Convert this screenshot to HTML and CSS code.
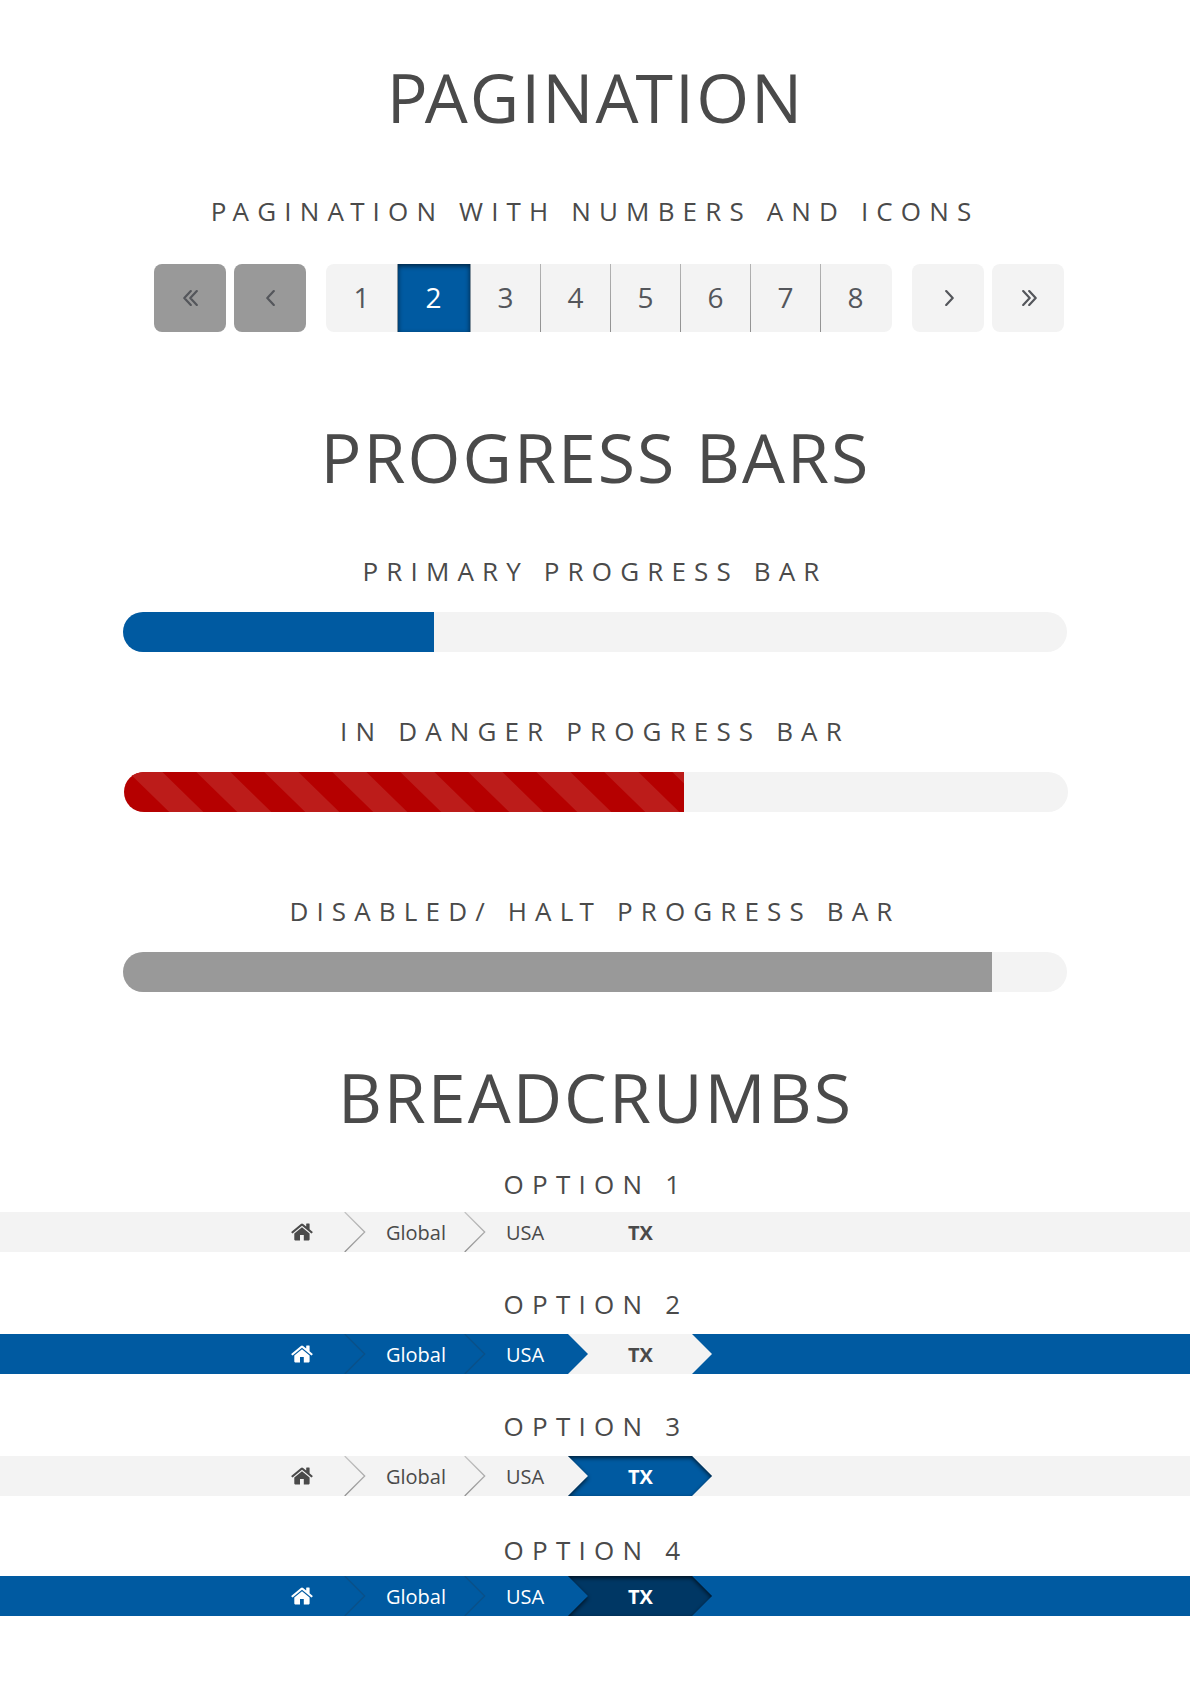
FILE: index.html
```html
<!DOCTYPE html>
<html lang="en">
<head>
<meta charset="utf-8">
<title>UI Components</title>
<link rel="stylesheet" href="styles.css">
</head>
<body>
<svg class="defs" width="0" height="0" aria-hidden="true">
  <symbol id="home" viewBox="0 0 22 18">
    <path d="M11 4.3 3.3 10.6V16.6Q3.3 17.4 4.1 17.4H9V11.9H12.8V17.4H17.8Q18.6 17.4 18.6 16.6V10.6Z"/>
    <path d="M21.5 8.7 18.6 6.3V.9Q18.6.4 18.1.4H15.7Q15.2.4 15.2.9V3.5L12.1.9Q11 .1 9.9.9L.5 8.7Q.1 9 .4 9.4L1.2 10.3Q1.5 10.6 1.9 10.3L11 2.7 20.1 10.3Q20.5 10.6 20.8 10.3L21.6 9.4Q21.9 9 21.5 8.7Z"/>
  </symbol>
  <symbol id="angle" viewBox="0 0 9 16"><path d="M7.8 1.1 1.3 8 7.8 14.9"/></symbol>
  <symbol id="angles" viewBox="0 0 15 16"><path d="M7.8 1.1 1.3 8 7.8 14.9M13.8 1.1 7.3 8 13.8 14.9"/></symbol>
  <symbol id="sep" viewBox="0 0 22 40"><path d="M.7 0 20.7 20 .7 40"/></symbol>
  <linearGradient id="line" x1="0" y1="0" x2="0" y2="1"><stop offset="0" stop-color="#c4c4c4"/><stop offset="1" stop-color="#929292"/></linearGradient>
  <filter id="inset" x="-10%" y="-30%" width="120%" height="160%" color-interpolation-filters="sRGB">
    <feFlood flood-color="#000" flood-opacity=".65"/>
    <feComposite in2="SourceAlpha" operator="out"/>
    <feGaussianBlur stdDeviation="2"/>
    <feOffset dy="2"/>
    <feComposite in2="SourceAlpha" operator="in" result="shade"/>
    <feMerge><feMergeNode in="SourceGraphic"/><feMergeNode in="shade"/></feMerge>
  </filter>
</svg>
<main>
  <section class="pagination">
    <h1><span class="kern">P</span>AGIN<span class="kern">A</span>TION</h1>
    <h2><span class="kern">P</span>AGIN<span class="kern">A</span>TION WITH NUMBERS AND ICONS</h2>
    <nav class="pager">
      <a class="step off"><svg width="15" height="16"><use href="#angles"/></svg></a>
      <a class="step off"><svg width="9" height="16"><use href="#angle"/></svg></a>
      <div class="pages">
        <a class="first">1</a><a class="current">2</a><a class="third">3</a><a>4</a><a>5</a><a>6</a><a>7</a><a>8</a>
      </div>
      <a class="step next"><svg width="9" height="16"><use href="#angle"/></svg></a>
      <a class="step next"><svg width="15" height="16"><use href="#angles"/></svg></a>
    </nav>
  </section>

  <section class="progress">
    <h1>PROGRESS BARS</h1>
    <h2>PRIMARY PROGRESS BAR</h2>
    <div class="bar"><div class="fill primary" style="width:311px"></div></div>
    <h2 class="danger-title">IN DANGER PROGRESS BAR</h2>
    <div class="bar danger-bar"><div class="fill danger" style="width:560px">
      <svg width="560" height="40"><defs><pattern id="stripes" width="68" height="40" patternUnits="userSpaceOnUse"><path d="M4.3 0H38.3L79.3 40H45.3ZM-63.7 0H-29.7L11.3 40H-22.7Z"/></pattern></defs><rect width="560" height="40" fill="url(#stripes)"/></svg>
    </div></div>
    <h2 class="halt-title">DISABLED/ HA<span class="kern">L</span>T PROGRESS BAR</h2>
    <div class="bar"><div class="fill halt" style="width:869px"></div></div>
  </section>

  <section class="breadcrumbs">
    <h1>BREADCRUMBS</h1>
    <h2 class="o1">OPTION 1</h2>
    <nav class="crumbs light">
      <a class="home"><svg width="22" height="18"><use href="#home"/></svg></a>
      <svg class="sep" width="22" height="40"><use href="#sep"/></svg>
      <a class="global">Global</a>
      <svg class="sep" width="22" height="40"><use href="#sep"/></svg>
      <a class="usa">USA</a>
      <div class="here"><b>TX</b></div>
    </nav>
    <h2 class="o2">OPTION 2</h2>
    <nav class="crumbs blue">
      <a class="home"><svg width="22" height="18"><use href="#home"/></svg></a>
      <svg class="sep" width="22" height="40"><use href="#sep"/></svg>
      <a class="global">Global</a>
      <svg class="sep" width="22" height="40"><use href="#sep"/></svg>
      <a class="usa">USA</a>
      <div class="here gray-arrow"><svg width="144" height="40"><path d="M0 0H124L144 20 124 40H0L20 20Z"/></svg><b>TX</b></div>
    </nav>
    <h2 class="o3">OPTION 3</h2>
    <nav class="crumbs light">
      <a class="home"><svg width="22" height="18"><use href="#home"/></svg></a>
      <svg class="sep" width="22" height="40"><use href="#sep"/></svg>
      <a class="global">Global</a>
      <svg class="sep" width="22" height="40"><use href="#sep"/></svg>
      <a class="usa">USA</a>
      <div class="here blue-arrow"><svg width="144" height="40"><path filter="url(#inset)" d="M0 0H124L144 20 124 40H0L20 20Z"/></svg><b>TX</b></div>
    </nav>
    <h2 class="o4">OPTION 4</h2>
    <nav class="crumbs blue">
      <a class="home"><svg width="22" height="18"><use href="#home"/></svg></a>
      <svg class="sep" width="22" height="40"><use href="#sep"/></svg>
      <a class="global">Global</a>
      <svg class="sep" width="22" height="40"><use href="#sep"/></svg>
      <a class="usa">USA</a>
      <div class="here navy-arrow"><svg width="144" height="40"><path filter="url(#inset)" d="M0 0H124L144 20 124 40H0L20 20Z"/></svg><b>TX</b></div>
    </nav>
  </section>
</main>
</body>
</html>
```
FILE: styles.css
```css
* { box-sizing: border-box; }
body { margin: 0; background: #fff; color: #4a4a4a; font-family: "Open Sans", sans-serif; }
main { display: flex; flex-direction: column; width: 1190px; height: 1684px; overflow: hidden; }
.defs { position: absolute; }
svg { display: block; flex: none; }
h1, h2 { margin: 0; font-weight: 400; text-align: center; white-space: nowrap; }
h1 { padding-left: 1px; font-size: 68px; line-height: 68px; letter-spacing: 2.04px; }
h2 { font-size: 26px; line-height: 26px; letter-spacing: 8.15px; }
h1 .kern { letter-spacing: -2.9px; }
h2 .kern { letter-spacing: 6.3px; }

.pagination { padding-top: 63px; height: 422px; }
.pagination h2 { margin-top: 67px; }
.pager { display: flex; margin: 40px 0 0 154px; height: 68px; }
.pager a { display: flex; align-items: center; justify-content: center; font-size: 28px; color: #54565b; }
.pager svg { fill: none; stroke: #54565b; stroke-width: 2.2; stroke-linecap: round; stroke-linejoin: round; }
.step { width: 72px; margin-right: 8px; border-radius: 8px; background: #f3f3f3; }
.step.off { background: #999; }
.step.next { padding-left: 3px; }
.step.next svg { transform: scaleX(-1); }
.pages { display: flex; width: 566px; margin: 0 20px 0 12px; border-radius: 8px; background: #f3f3f3; overflow: hidden; }
.pager .pages a { width: 70px; padding-bottom: 2px; border-left: 1px solid; border-image: linear-gradient(#b4b4b4, #8f8f8f) 1; }
.pager .pages a:last-child { width: 72px; padding-right: 2px; }
.pager .pages .first { width: 71px; border: 0; }
.pager .pages .current { width: 74px; padding-right: 1px; color: #fff; background: #005aa1; box-shadow: inset 0 2px 5px rgba(0, 0, 0, .6); border: solid #8795a0; border-width: 0 1px; border-image: none; }
.pager .pages .third { width: 69px; border: 0; }

.progress { height: 640px; padding-top: 1px; }
.progress h2 { margin-top: 67px; }
.bar { width: 944px; height: 40px; margin: 28px 0 0 123px; border-radius: 20px; background: #f3f3f3; overflow: hidden; }
.fill { height: 40px; }
.primary { background: #005aa1; }
.progress .danger-title { margin-top: 66px; }
.danger-bar { margin-left: 124px; }
.danger { background: #b50000; fill: #bc1c1a; }
.progress .halt-title { margin-top: 86px; }
.halt { background: #999; }

.breadcrumbs { padding-top: 1px; }
.breadcrumbs h2 { padding-left: 2px; letter-spacing: 8.25px; }
.crumbs { display: flex; height: 40px; margin-top: 15px; padding-left: 291px; font-size: 20px; line-height: 41px; }
.light { background: #f3f3f3; fill: #4a4a4a; }
.blue { background: #005aa1; color: #fff; fill: #fff; }
.home { width: 53px; padding-top: 11px; }
.sep { fill: none; stroke: url(#line); stroke-width: 1.3; }
.blue .sep { stroke: #0a5088; }
.global { width: 98px; padding-left: 20px; }
.usa { width: 82px; padding-left: 20px; }
.here { display: grid; width: 144px; }
.here > * { grid-area: 1 / 1; }
.here b { padding-left: 1px; text-align: center; }
.gray-arrow { color: #4a4a4a; fill: #f3f3f3; }
.blue-arrow { color: #fff; fill: #005aa1; }
.navy-arrow { fill: #003764; }
.o1 { margin-top: 40px; }
.o2, .o3 { margin-top: 39px; }
.o2 + .crumbs, .o3 + .crumbs { margin-top: 17px; }
.o4 { margin-top: 41px; }
.o4 + .crumbs { margin-top: 13px; }
```
